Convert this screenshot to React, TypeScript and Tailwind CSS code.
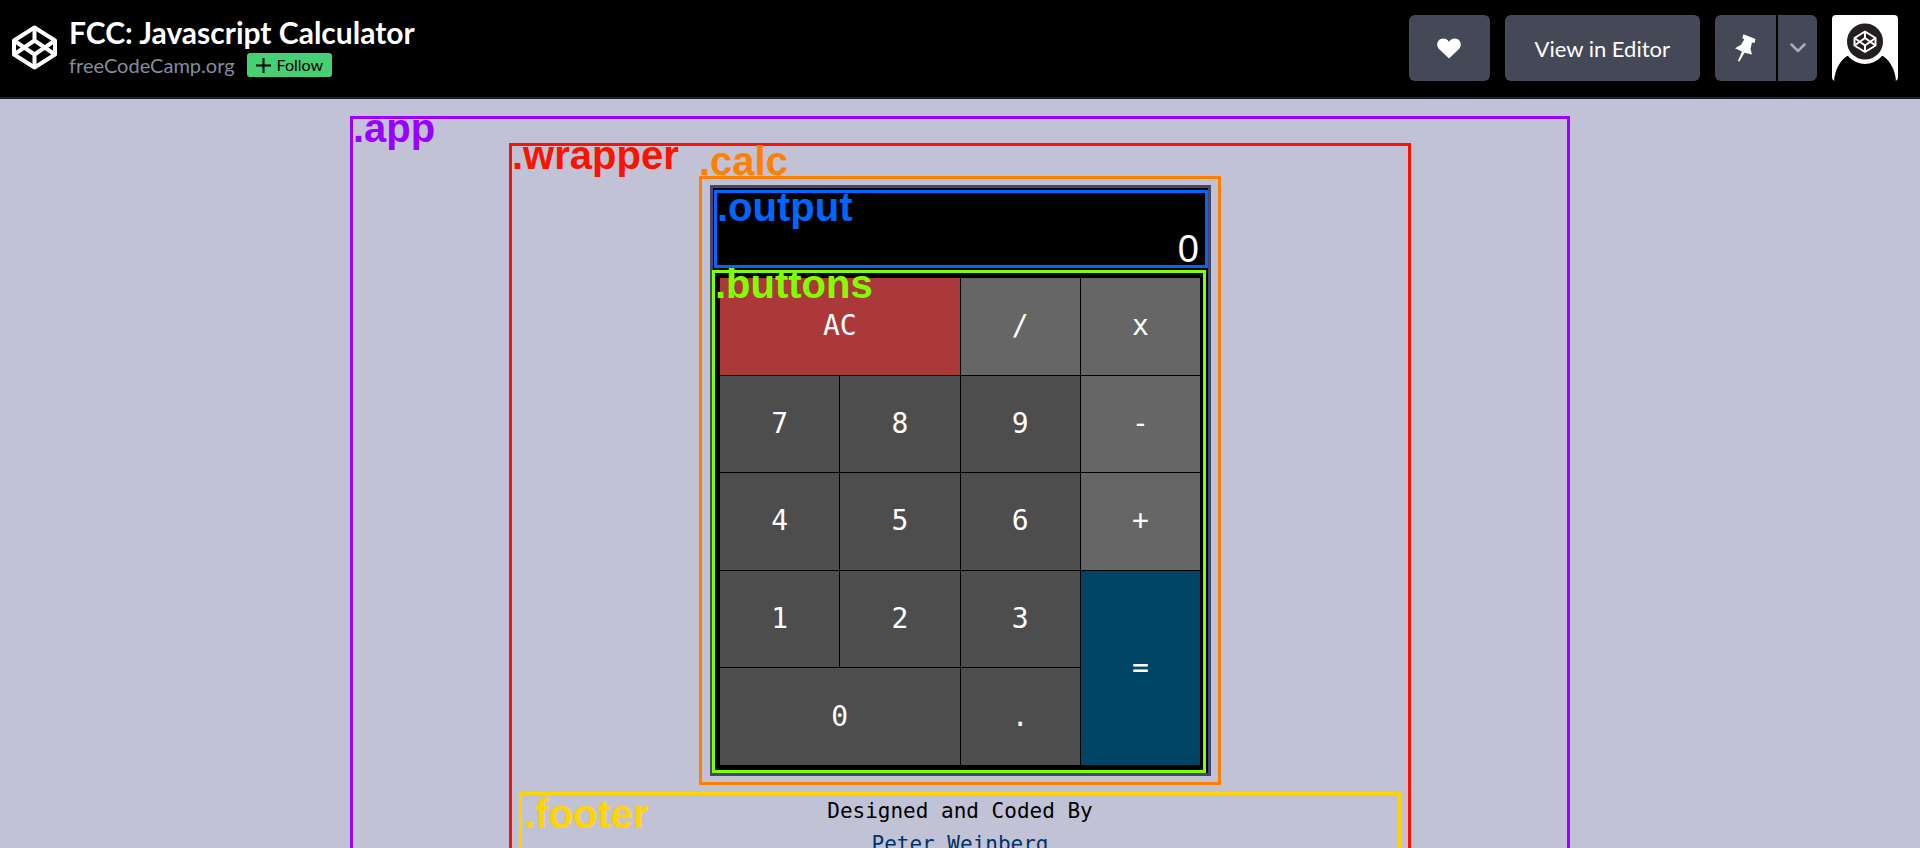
import { useState } from "react";

const label =
  "pointer-events-none absolute z-10 whitespace-nowrap font-['Liberation_Sans',sans-serif] text-[40px] leading-none font-bold";

type Key = { name: string; style: string };

const operator = "bg-[#666666]";
const digit = "bg-[#4d4d4d]";

const keys: Key[] = [
  { name: "AC", style: "col-span-2 bg-[#ac3939]" },
  { name: "/", style: operator },
  { name: "x", style: operator },
  { name: "7", style: digit },
  { name: "8", style: digit },
  { name: "9", style: digit },
  { name: "-", style: operator },
  { name: "4", style: digit },
  { name: "5", style: digit },
  { name: "6", style: digit },
  { name: "+", style: operator },
  { name: "1", style: digit },
  { name: "2", style: digit },
  { name: "3", style: digit },
  { name: "=", style: "row-span-2 bg-[#004466]" },
  { name: "0", style: "col-span-2 bg-[#4d4d4d]" },
  { name: ".", style: digit },
];

function CodePenMark({ className }: { className: string }) {
  return (
    <svg viewBox="0 0 45 45" className={className} fill="none" stroke="currentColor" strokeWidth="4" strokeLinejoin="round" aria-hidden="true">
      <path d="M22.5 2.5 43 15.5v14L22.5 42.5 2 29.5v-14z" />
      <path d="M22.5 2.5v13M22.5 42.5v-13M2 15.5l20.5 14L43 15.5M2 29.5l20.5-14L43 29.5" />
    </svg>
  );
}

function Header() {
  return (
    <header className="flex h-[99px] shrink-0 items-start justify-between border-b-2 border-[#1e1f26] bg-black pr-[22px] pl-3 font-['Lato',sans-serif] text-white">
      <div className="flex items-center gap-3 pt-4">
        <a href="#home" aria-label="CodePen">
          <CodePenMark className="size-[45px]" />
        </a>
        <div>
          <h1 className="text-[30px] leading-8 font-bold">FCC: Javascript Calculator</h1>
          <div className="mt-[3px] flex items-center gap-3">
            <a href="#author" className="text-[20px] leading-7 text-[#868ca0]">
              freeCodeCamp.org
            </a>
            <button className="flex h-6 items-center gap-1.5 rounded-[3px] bg-[#47cf73] px-[9px] text-[16px] text-black">
              <svg viewBox="0 0 15 15" className="size-[15px]" stroke="currentColor" strokeWidth="2" aria-hidden="true">
                <path d="M7.5 0v15M0 7.5h15" />
              </svg>
              Follow
            </button>
          </div>
        </div>
      </div>
      <div className="flex gap-[15px] pt-[15px]">
        <button aria-label="Love" className="flex h-[66px] w-[81px] items-center justify-center rounded-md bg-[#444857]">
          <svg viewBox="0 0 24 21" className="h-[21px] w-6" fill="currentColor" aria-hidden="true">
            <path d="M12 20.5 2 11C-1.5 7.5.3.5 6.3.5 9 .5 11 2 12 4 13 2 15 .5 17.7.5c6 0 7.8 7 4.300 10.500z" />
          </svg>
        </button>
        <button className="h-[66px] rounded-md bg-[#444857] px-[30px] text-[22px]">View in Editor</button>
        <div className="flex gap-0.5">
          <button aria-label="Pin" className="flex h-[66px] w-[61px] items-center justify-center rounded-l-md bg-[#444857]">
            <svg viewBox="0 0 21 28" className="h-7 w-[21px]" fill="currentColor" aria-hidden="true">
              <path d="M8.5.3 20.500 5l-1 4-2.500-.4-1.500 6.400 1.500 5.400-7.500-1.600L4.500 27.500l-1.700-.6 4.200-9.400-7-3.300 6-3.400 3.200-5.300-1.900-1.500z" />
            </svg>
          </button>
          <button aria-label="More options" className="flex h-[66px] w-[39px] items-center justify-center rounded-r-md bg-[#444857] text-[#a9acbd]">
            <svg viewBox="0 0 16 10" className="h-2.5 w-4" fill="none" stroke="currentColor" strokeWidth="2.5" strokeLinecap="round" strokeLinejoin="round" aria-hidden="true">
              <path d="m1.5 1.5 6.5 6.5 6.5-6.5" />
            </svg>
          </button>
        </div>
        <button aria-label="Account" className="size-[66px] overflow-hidden rounded-[4px] bg-white">
          <svg viewBox="0 0 66 66" className="size-full" aria-hidden="true">
            <path d="M2 66C3 54 8 46 15 41h36c7 5 12 13 13 25z" fill="#000" />
            <circle cx="33" cy="27" r="22" fill="#fff" />
            <circle cx="33" cy="26.5" r="18" fill="#231f20" />
            <g fill="none" stroke="#fff" strokeWidth="2" strokeLinejoin="round">
              <path d="M33 16.5 43.5 23v7.500L33 37l-10.500-6.500V23z" />
              <path d="M33 16.5V23M33 37v-6.500M22.5 23 33 30.500 43.500 23M22.5 30.500 33 23l10.500 7.500" />
            </g>
          </svg>
        </button>
      </div>
    </header>
  );
}

function Calculator() {
  const [value, setValue] = useState("0");

  const press = (name: string) => {
    if (name === "AC") setValue("0");
    else if (/[0-9.]/.test(name)) setValue((v) => (v === "0" ? name : v + name));
  };

  return (
    <section className="relative mx-auto w-[522px] border-3 border-[#ff8000] py-1.5 pr-[7px] pl-2">
      <span className={`${label} -top-[38px] -left-[3px] text-[#ff8000]`}>.calc</span>
      <div className="border-3 border-[#47476b] bg-black pt-0.5">
        <div className="relative ml-px flex h-[78px] items-end justify-end border-3 border-[#0066ff] pr-1.5">
          <span className={`${label} -top-[6px] left-0 text-[#0066ff]`}>.output</span>
          <output className="font-['Liberation_Sans',sans-serif] text-[38px] leading-8 text-white">{value}</output>
        </div>
        <div className="relative mt-0.5 mr-0.5 -ml-px border-3 border-[#80ff00] py-[5px] pr-[3px] pl-[5px]">
          <span className={`${label} -top-[9px] left-0 text-[#80ff00]`}>.buttons</span>
          <div className="grid h-[487px] grid-cols-4 grid-rows-5 gap-px bg-black">
            {keys.map((key) => (
              <button
                key={key.name}
                onClick={() => press(key.name)}
                className={`${key.style} font-['DejaVu_Sans_Mono',monospace] text-[28px] text-white`}
              >
                {key.name}
              </button>
            ))}
          </div>
        </div>
      </div>
    </section>
  );
}

export default function App() {
  return (
    <div className="flex h-screen flex-col overflow-hidden bg-[#c2c2d6]">
      <Header />
      <main className="relative mx-auto mt-[17px] h-[900px] w-full max-w-[1220px] shrink-0 border-3 border-[#9900ff] pt-6">
        <span className={`${label} -top-[11px] left-0 text-[#9900ff]`}>.app</span>
        <div className="relative mx-auto h-[840px] max-w-[902px] border-3 border-[#ff1100] px-[7px] pt-[30px]">
          <span className={`${label} -top-[11px] left-0 text-[#ff1100]`}>.wrapper</span>
          <Calculator />
          <footer className="relative mt-[7px] h-40 border-3 border-[#ffd500] text-center font-['DejaVu_Sans_Mono',monospace] text-[21px] leading-[33px] text-black">
            <span className={`${label} -top-px left-0.5 text-[#ffd500]`}>.footer</span>
            <p>Designed and Coded By</p>
            <a href="#profile" className="text-[#003366]">
              Peter Weinberg
            </a>
          </footer>
        </div>
      </main>
    </div>
  );
}
